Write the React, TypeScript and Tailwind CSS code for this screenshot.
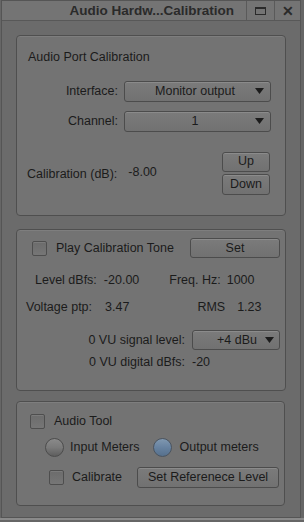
import React from "react";

const Caret = () => (
  <svg width="9" height="6" viewBox="0 0 9 6" className="shrink-0">
    <polygon points="0,0 9,0 4.5,6" fill="#1c1c1c" />
  </svg>
);

const Check = ({ className = "" }: { className?: string }) => (
  <div
    className={`w-[15px] h-[15px] rounded-[2px] border border-[#4e4e4e] bg-gradient-to-b from-[#6c6c6c] to-[#767676] shadow-[inset_0_1px_0_rgba(255,255,255,0.1)] ${className}`}
  />
);

const Btn = ({ children, className = "" }: { children: React.ReactNode; className?: string }) => (
  <div
    className={`flex items-center justify-center rounded-[3px] border border-[#4c4c4c] bg-gradient-to-b from-[#7b7b7b] to-[#717171] shadow-[inset_0_1px_0_rgba(255,255,255,0.12)] ${className}`}
  >
    {children}
  </div>
);

export default function App() {
  return (
    <div
      className="w-[304px] h-[522px] bg-[#666666] text-[#1b1b1b] text-[12.5px] leading-none overflow-hidden"
      style={{ fontFamily: '"Liberation Sans", Arial, sans-serif' }}
    >
      <div className="w-[300px] h-[518px] ml-[1px] border border-[#555555] bg-[#6b6b6b] flex flex-col">
        {/* title bar */}
        <div className="h-[20px] flex items-stretch justify-end border-b border-[#585858] bg-[#747474]">
          <div className="flex items-center pr-[12px] font-bold text-[13.5px] text-[#2a2a2a]">
            Audio Hardw...Calibration
          </div>
          <div className="w-[28px] border-l border-[#5a5a5a] flex items-center justify-center">
            <div className="w-[11px] h-[8px] border border-[#2a2a2a] border-t-2" />
          </div>
          <div className="w-[26px] border-l border-[#5a5a5a] flex items-center justify-center font-bold text-[14px] text-[#2a2a2a]">
            ✕
          </div>
        </div>

        <div className="flex flex-col px-[14px]">
          {/* group 1 */}
          <div className="mt-[14px] h-[181px] w-[270px] rounded-[4px] border border-[#4f4f4f] bg-[#737373] shadow-[inset_0_1px_0_rgba(255,255,255,0.08)] flex flex-col">
            <div className="ml-[11px] mt-[15px]">Audio Port Calibration</div>
            <div className="flex items-center mt-[17px]">
              <div className="w-[101px] text-right">Interface:</div>
              <Btn className="ml-[6px] w-[147px] h-[21px] justify-between px-[6px]">
                <span className="flex-1 text-center pl-[4px]">Monitor output</span>
                <Caret />
              </Btn>
            </div>
            <div className="flex items-center mt-[9px]">
              <div className="w-[101px] text-right">Channel:</div>
              <Btn className="ml-[6px] w-[147px] h-[21px] justify-between px-[6px]">
                <span className="flex-1 text-center pl-[4px]">1</span>
                <Caret />
              </Btn>
            </div>
            <div className="flex mt-[20px]">
              <div className="ml-[10px] mt-[16px]">Calibration (dB):</div>
              <div className="ml-[11px] mt-[14px]">-8.00</div>
              <div className="ml-auto mr-[15px] flex flex-col gap-[2px]">
                <Btn className="w-[48px] h-[20px]">Up</Btn>
                <Btn className="w-[48px] h-[21px]">Down</Btn>
              </div>
            </div>
          </div>

          {/* group 2 */}
          <div className="mt-[13px] h-[162px] w-[270px] rounded-[4px] border border-[#4f4f4f] bg-[#737373] shadow-[inset_0_1px_0_rgba(255,255,255,0.08)] flex flex-col">
            <div className="flex items-center mt-[8px]">
              <Check className="ml-[15px]" />
              <div className="ml-[9px]">Play Calibration Tone</div>
              <Btn className="ml-auto mr-[5px] w-[90px] h-[20px]">Set</Btn>
            </div>
            <div className="flex items-center mt-[16px]">
              <div className="ml-[18px]">Level dBfs:</div>
              <div className="ml-[7px]">-20.00</div>
              <div className="ml-[30px]">Freq. Hz:</div>
              <div className="ml-[6px]">1000</div>
            </div>
            <div className="flex items-center mt-[14px]">
              <div className="ml-[9px]">Voltage ptp:</div>
              <div className="ml-[13px]">3.47</div>
              <div className="ml-[68px]">RMS</div>
              <div className="ml-[12px]">1.23</div>
            </div>
            <div className="flex items-center mt-[17px]">
              <div className="w-[168px] text-right">0 VU signal level:</div>
              <Btn className="ml-[7px] w-[88px] h-[20px] justify-end px-[5px] gap-[8px]">
                <span>+4 dBu</span>
                <Caret />
              </Btn>
            </div>
            <div className="flex items-center mt-[6px]">
              <div className="w-[168px] text-right">0 VU digital dBfs:</div>
              <div className="ml-[7px]">-20</div>
            </div>
          </div>

          {/* group 3 */}
          <div className="mt-[10px] h-[105px] w-[269px] rounded-[4px] border border-[#4f4f4f] bg-[#737373] shadow-[inset_0_1px_0_rgba(255,255,255,0.08)] flex flex-col">
            <div className="flex items-center mt-[12px]">
              <Check className="ml-[13px]" />
              <div className="ml-[9px]">Audio Tool</div>
            </div>
            <div className="flex items-center mt-[9px]">
              <div className="ml-[28px] w-[19px] h-[19px] rounded-full border border-[#4c4c4c] bg-gradient-to-b from-[#8a8a8a] via-[#7a7a7a] to-[#5e5e5e]" />
              <div className="ml-[6px]">Input Meters</div>
              <div className="ml-[14px] w-[19px] h-[19px] rounded-full border border-[#4a5460] bg-gradient-to-b from-[#8098b0] via-[#6782a0] to-[#56708c]" />
              <div className="ml-[7px]">Output meters</div>
            </div>
            <div className="flex items-center mt-[10px]">
              <Check className="ml-[32px]" />
              <div className="ml-[8px]">Calibrate</div>
              <Btn className="ml-auto mr-[5px] w-[142px] h-[21px]">Set Referenece Level</Btn>
            </div>
          </div>
        </div>
      </div>
      <div className="h-[2px] w-[304px] bg-[#8a8a8a]" />
    </div>
  );
}
